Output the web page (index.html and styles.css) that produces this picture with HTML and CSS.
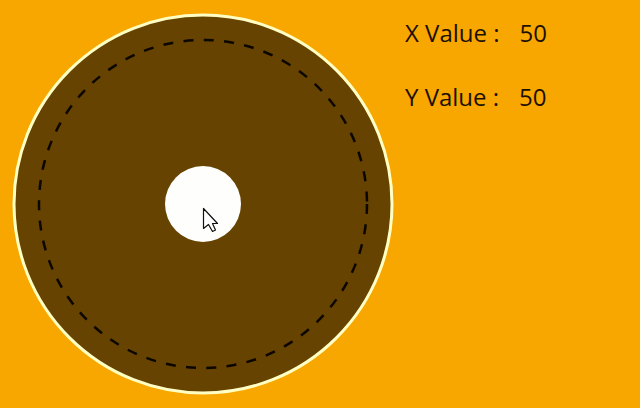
FILE: index.html
```html
<!DOCTYPE html>
<html lang="en">
<head>
  <meta charset="utf-8">
  <meta name="viewport" content="width=device-width, initial-scale=1">
  <title>Joystick</title>
  <link rel="stylesheet" href="styles.css">
</head>
<body>
  <main class="panel">
    <svg class="joystick" viewBox="0 0 382 382" aria-hidden="true">
      <circle class="base" cx="191" cy="191" r="189"/>
      <circle class="limit" cx="191" cy="191" r="164"/>
      <circle class="knob" cx="191" cy="191" r="38"/>
      <path class="pointer" d="M191.5 195.500V215.500L196.500 211.500L200.500 218.500L203.500 217L200.500 210.500H205.500Z"/>
    </svg>
    <dl class="readings">
      <div class="reading">
        <dt>X Value :</dt>
        <dd>50</dd>
      </div>
      <div class="reading">
        <dt>Y Value :</dt>
        <dd>50</dd>
      </div>
    </dl>
  </main>
</body>
</html>
```

FILE: styles.css
```css
body {
  margin: 0;
  background: #f7a700;
  color: #1c1000;
  font-family: "Segoe UI", "Open Sans", "Noto Sans", sans-serif;
}

.panel {
  display: flex;
  align-items: flex-start;
  gap: 11px;
  padding: 13px 12px;
}

.joystick {
  flex: none;
  width: 382px;
}

.base {
  fill: #664300;
  stroke: #ffffc4;
  stroke-width: 3;
}

.limit {
  fill: none;
  stroke: #0c0600;
  stroke-width: 2.5;
  stroke-dasharray: 10 10.35;
}

.knob {
  fill: #fefefc;
}

.pointer {
  fill: #fff;
  stroke: #111;
  stroke-width: 1.2;
  stroke-linejoin: round;
}

.readings {
  display: grid;
  gap: 32px;
  margin: 4px 0 0;
  font-size: 24px;
  line-height: 32px;
}

.reading {
  display: flex;
  gap: 20px;
}

.reading dd {
  margin: 0;
}
```
